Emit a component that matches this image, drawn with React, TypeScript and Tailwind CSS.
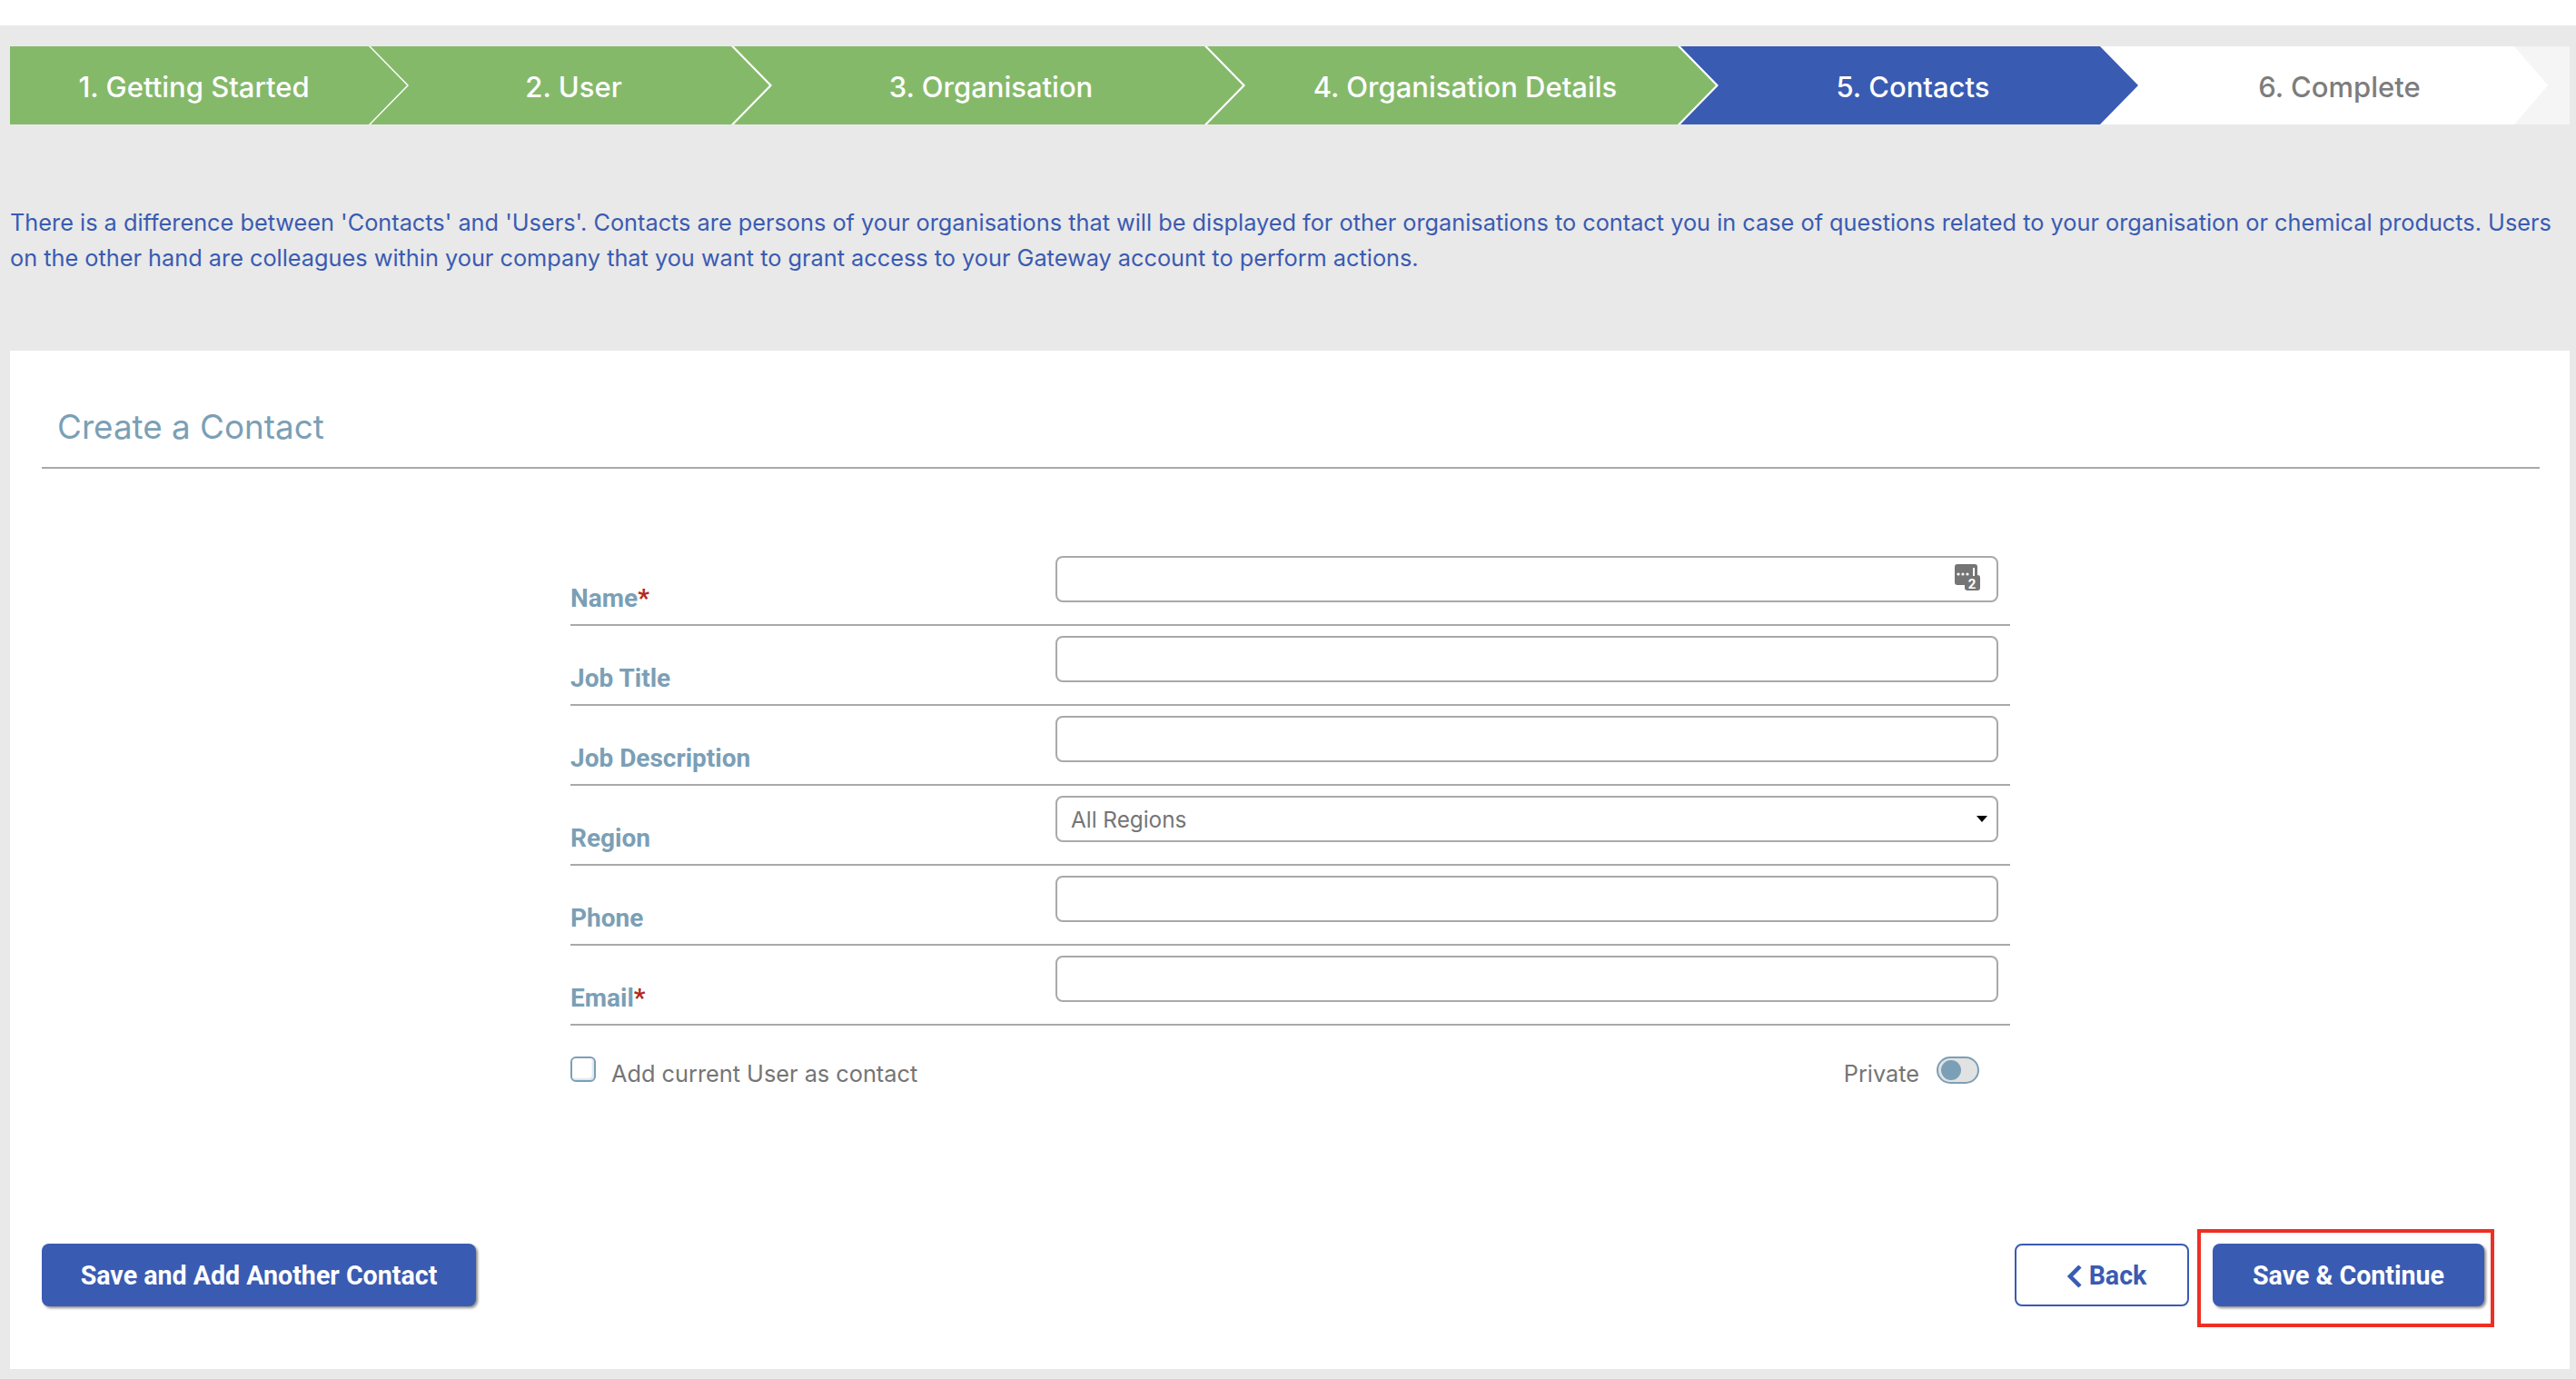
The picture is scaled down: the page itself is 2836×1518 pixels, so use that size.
import React from "react";

const labelClass =
  "w-[534px] mb-[12px] font-['Roboto',sans-serif] text-[28px] leading-[32px] font-bold text-[#7b9fb6]";
const inputClass =
  "block w-full h-[51px] bg-white border-2 border-[#a9a9a9] rounded-[8px] outline-none";

const ChatCountIcon = () => (
  <svg
    className="absolute right-[19px] top-[8px]"
    width="30"
    height="31"
    viewBox="0 0 30 31"
  >
    <rect x="1" y="1" width="25" height="23" rx="3" fill="#757575" />
    <rect x="12" y="13" width="17" height="17" rx="3" fill="#757575" />
    <circle cx="5" cy="12" r="1.6" fill="#fff" />
    <circle cx="10" cy="12" r="1.6" fill="#fff" />
    <circle cx="15" cy="12" r="1.6" fill="#fff" />
    <rect x="21" y="5" width="2" height="9" fill="#fff" />
    <text x="20" y="28" textAnchor="middle" fontSize="15" fontWeight="700" fontFamily="Roboto, sans-serif" fill="#fff">
      2
    </text>
  </svg>
);

const Row = ({ label, required, children }: { label: string; required?: boolean; children?: React.ReactNode }) => (
  <div className="flex items-end h-[88px] border-b-2 border-[#a9a9a9]">
    <div className={labelClass}>
      {label}
      {required && <span className="text-[#b5271a]">*</span>}
    </div>
    <div className="relative w-[1038px] mb-[24px]">{children}</div>
  </div>
);

const App = () => {
  return (
    <div className="w-[2836px] h-[1518px] bg-white pt-[28px] overflow-hidden font-['Inter',sans-serif]">
      <div className="flex flex-col h-[1490px] bg-[#e9e9e9] pl-[11px] pr-[7px] pt-[23px] pb-[11px]">
        {/* STEPPER */}
        <div className="flex h-[86px] bg-white text-[31px] font-medium text-white shrink-0">
          <div className="flex items-center justify-center w-[437px] pr-[32px] pt-[4px] bg-[#85b96a] [clip-path:polygon(0_0,395px_0,100%_50%,395px_100%,0_100%)]">
            1. Getting Started
          </div>
          <div className="flex items-center justify-center w-[439px] -ml-[40px] pl-[8px] pt-[4px] bg-[#85b96a] [clip-path:polygon(0_0,397px_0,100%_50%,397px_100%,0_100%,42px_50%)]">
            2. User
          </div>
          <div className="flex items-center justify-center w-[560px] -ml-[39px] pl-[6px] pt-[4px] bg-[#85b96a] [clip-path:polygon(0_0,518px_0,100%_50%,518px_100%,0_100%,42px_50%)]">
            3. Organisation
          </div>
          <div className="flex items-center justify-center w-[560px] -ml-[39px] pl-[8px] pt-[4px] bg-[#85b96a] [clip-path:polygon(0_0,518px_0,100%_50%,518px_100%,0_100%,42px_50%)]">
            4. Organisation Details
          </div>
          <div className="relative z-10 flex items-center justify-center w-[504px] -ml-[39px] pl-[8px] pt-[4px] bg-[#3a5bb2] [clip-path:polygon(0_0,462px_0,100%_50%,462px_100%,0_100%,42px_50%)]">
            5. Contacts
          </div>
          <div className="flex-1 -ml-[42px] bg-[#f5f5f5]">
            <div className="flex items-center justify-center w-[493px] h-full pl-[34px] pt-[4px] bg-white text-[#7d7d7d] [clip-path:polygon(0_0,456px_0,100%_50%,456px_100%,0_100%)]">
              6. Complete
            </div>
          </div>
        </div>

        <p className="mt-[88px] mb-[83px] text-[25.3px] leading-[39px] text-[#3a5bb2] shrink-0">
          There is a difference between 'Contacts' and 'Users'. Contacts are persons of your organisations that will be displayed for other organisations to contact you in case of questions related to your organisation or chemical products. Users on the other hand are colleagues within your company that you want to grant access to your Gateway account to perform actions.
        </p>

        {/* CARD */}
        <div className="flex flex-col flex-1 bg-white pl-[35px] pr-[33px] pb-[69px]">
          <div className="pt-[60px] pb-[20px] pl-[17px] border-b-2 border-[#a9a9a9] text-[36.8px] leading-[48px] text-[#7b9fb6]">
            Create a Contact
          </div>

          <div className="w-[1585px] mt-[85px] ml-[582px]">
            <Row label="Name" required>
              <div className={inputClass} />
              <ChatCountIcon />
            </Row>
            <Row label="Job Title">
              <div className={inputClass} />
            </Row>
            <Row label="Job Description">
              <div className={inputClass} />
            </Row>
            <Row label="Region">
              <div className={`${inputClass} flex items-center justify-between pl-[15px] pr-[10px] text-[24.3px] text-[#757575]`}>
                <span className="pt-[2px]">All Regions</span>
                <span className="w-0 h-0 border-x-[6px] border-t-[7px] border-x-transparent border-t-black" />
              </div>
            </Row>
            <Row label="Phone">
              <div className={inputClass} />
            </Row>
            <Row label="Email" required>
              <div className={inputClass} />
            </Row>

            <div className="flex items-start justify-between mt-[34px] pr-[34px] text-[25.3px] leading-[36px] text-[#757575]">
              <div className="flex items-start">
                <span className="w-[28px] h-[28px] border-2 border-[#7b9fb6] rounded-[6px] bg-white shadow-[inset_-2px_-2px_2px_#dbe5ec]" />
                <span className="ml-[17px] mt-[1px]">Add current User as contact</span>
              </div>
              <div className="flex items-start">
                <span className="mt-[1px]">Private</span>
                <span className="flex items-center w-[47px] h-[30px] ml-[19px] pl-[3px] border-2 border-[#7b9fb6] rounded-full bg-[#e2e2e2]">
                  <span className="w-[22px] h-[22px] rounded-full bg-[#7b9fb6]" />
                </span>
              </div>
            </div>
          </div>

          {/* FOOTER BUTTONS */}
          <div className="flex items-center justify-between mt-auto pr-[61px] font-['Roboto',sans-serif] text-[28.6px] font-bold">
            <button className="w-[478px] h-[69px] pt-[2px] rounded-[8px] bg-[#3a5bb2] text-white shadow-[2px_2px_3px_rgba(0,0,0,0.45)]">
              Save and Add Another Contact
            </button>
            <div className="flex items-center gap-[26px]">
              <button className="flex items-center justify-center gap-[8px] w-[192px] h-[69px] pt-[2px] pl-[10px] border-2 border-[#3a5bb2] rounded-[8px] bg-white text-[#3a5bb2]">
                <svg width="17" height="26" viewBox="0 0 17 26" fill="none" stroke="#3a5bb2" strokeWidth="4.5">
                  <path d="M15 2 L4 13 L15 24" />
                </svg>
                Back
              </button>
              <div className="relative">
                <button className="w-[299px] h-[69px] pt-[2px] rounded-[8px] bg-[#3a5bb2] text-white shadow-[2px_2px_3px_rgba(0,0,0,0.45)]">
                  Save &amp; Continue
                </button>
                <div className="absolute -left-[17px] -right-[11px] -top-[16px] -bottom-[23px] border-4 border-[#ee2f24]" />
              </div>
            </div>
          </div>
        </div>
      </div>
    </div>
  );
};

export default App;
